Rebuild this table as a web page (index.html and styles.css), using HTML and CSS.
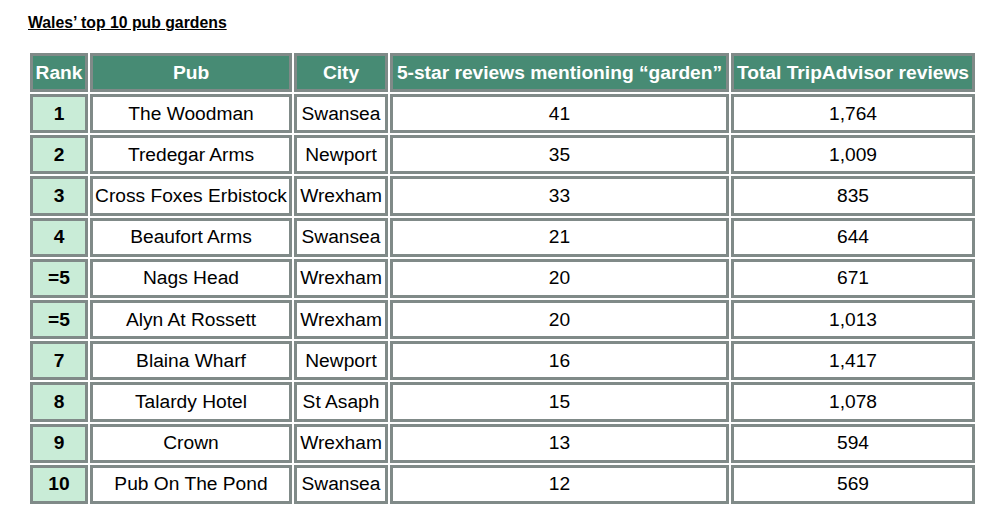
FILE: index.html
```html
<!DOCTYPE html>
<html>
<head>
<meta charset="utf-8">
<link rel="stylesheet" href="styles.css">
</head>
<body>
<div class="title">Wales’ top 10 pub gardens</div>
<table class="pubs">
<thead>
<tr>
<th class="c-rank">Rank</th>
<th class="c-pub">Pub</th>
<th class="c-city">City</th>
<th class="c-five">5-star reviews mentioning “garden”</th>
<th class="c-total">Total TripAdvisor reviews</th>
</tr>
</thead>
<tbody>
<tr><td class="rank">1</td><td>The Woodman</td><td>Swansea</td><td>41</td><td>1,764</td></tr>
<tr><td class="rank">2</td><td>Tredegar Arms</td><td>Newport</td><td>35</td><td>1,009</td></tr>
<tr><td class="rank">3</td><td>Cross Foxes Erbistock</td><td>Wrexham</td><td>33</td><td>835</td></tr>
<tr><td class="rank">4</td><td>Beaufort Arms</td><td>Swansea</td><td>21</td><td>644</td></tr>
<tr><td class="rank">=5</td><td>Nags Head</td><td>Wrexham</td><td>20</td><td>671</td></tr>
<tr><td class="rank">=5</td><td>Alyn At Rossett</td><td>Wrexham</td><td>20</td><td>1,013</td></tr>
<tr><td class="rank">7</td><td>Blaina Wharf</td><td>Newport</td><td>16</td><td>1,417</td></tr>
<tr><td class="rank">8</td><td>Talardy Hotel</td><td>St Asaph</td><td>15</td><td>1,078</td></tr>
<tr><td class="rank">9</td><td>Crown</td><td>Wrexham</td><td>13</td><td>594</td></tr>
<tr><td class="rank">10</td><td>Pub On The Pond</td><td>Swansea</td><td>12</td><td>569</td></tr>
</tbody>
</table>
</body>
</html>
```
FILE: styles.css
```css
html, body {
  margin: 0;
  padding: 0;
  background: #ffffff;
  font-family: "Liberation Sans", Arial, sans-serif;
  color: #000;
}
.title {
  padding: 14px 0 0 28px;
  font-size: 15.8px;
  line-height: 18px;
  font-weight: bold;
  text-decoration: underline;
}
.pubs {
  width: 947px;
  margin: 19px 0 0 28px;
  border-collapse: separate;
  border-spacing: 2px;
  table-layout: fixed;
  font-size: 19.2px;
}
.pubs th, .pubs td {
  box-sizing: border-box;
  height: 39px;
  border: 3px solid #808a88;
  padding: 0;
  text-align: center;
  vertical-align: middle;
  white-space: nowrap;
  line-height: 22px;
}
.pubs td {
  height: 39.2px;
}
.pubs th {
  background: #478b74;
  color: #ffffff;
  font-weight: bold;
}
.pubs td {
  background: #ffffff;
}
.pubs td.rank {
  background: #c9ecd7;
  font-weight: bold;
}
.c-rank { width: 58px; }
.c-pub { width: 202px; }
.c-city { width: 94px; }
.c-five { width: 339px; }
.c-total { width: 244px; }
```
